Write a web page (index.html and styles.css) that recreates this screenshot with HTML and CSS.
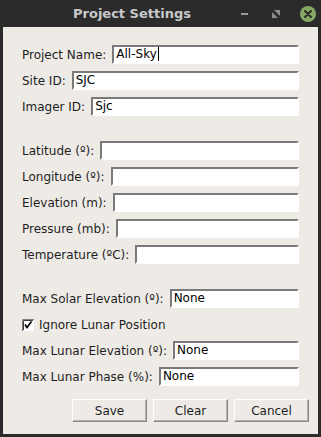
FILE: index.html
```html
<!DOCTYPE html>
<html lang="en">
<head>
    <meta charset="UTF-8" />
    <meta name="viewport" content="width=device-width, initial-scale=1.0"/>
    <title>Project Settings</title>
    <link rel="stylesheet" href="styles.css">
</head>
<body>

<div class="window">
    <div class="titlebar">
        <div class="title">Project Settings</div>
        <div class="controls">
            <span class="ctl-min"></span>
            <svg class="ctl-max" width="8" height="8" viewBox="0 0 8 8">
                <polygon points="2,0 8,0 8,6" fill="#8c8c8c"/>
                <polygon points="0,2 0,8 6,8" fill="#8c8c8c"/>
            </svg>
            <svg class="ctl-close" width="16" height="16" viewBox="0 0 16 16">
                <circle cx="8" cy="8" r="8" fill="#86a862"/>
                <path d="M5 5 L11 11 M11 5 L5 11" stroke="#2b2b2b" stroke-width="2" stroke-linecap="round"/>
            </svg>
        </div>
    </div>

    <div class="content">
        <!-- Project -->
        <div class="row">
            <label>Project Name:</label>
            <div class="entry">All-Sky<span class="cursor"></span></div>
        </div>
        <div class="row">
            <label>Site ID:</label>
            <div class="entry">SJC</div>
        </div>
        <div class="row">
            <label>Imager ID:</label>
            <div class="entry">Sjc</div>
        </div>

        <div class="spacer"></div>

        <!-- Location -->
        <div class="row">
            <label>Latitude (º):</label>
            <div class="entry"></div>
        </div>
        <div class="row">
            <label>Longitude (º):</label>
            <div class="entry"></div>
        </div>
        <div class="row">
            <label>Elevation (m):</label>
            <div class="entry"></div>
        </div>
        <div class="row">
            <label>Pressure (mb):</label>
            <div class="entry"></div>
        </div>
        <div class="row">
            <label>Temperature (ºC):</label>
            <div class="entry"></div>
        </div>

        <div class="spacer"></div>

        <!-- Limits -->
        <div class="row">
            <label>Max Solar Elevation (º):</label>
            <div class="entry">None</div>
        </div>
        <div class="row">
            <svg class="checkbox" width="12" height="12" viewBox="0 0 12 12">
                <rect x="0" y="0" width="12" height="12" fill="#fff"/>
                <path d="M0.5 12 V0.5 H12" stroke="#7f7f7f" fill="none"/>
                <path d="M1.5 11 V1.5 H11" stroke="#3c3c3c" fill="none"/>
                <path d="M3 5.5 L5 8.5 L9.5 2.5" stroke="#000" stroke-width="1.6" fill="none"/>
            </svg>
            <label>Ignore Lunar Position</label>
        </div>
        <div class="row">
            <label>Max Lunar Elevation (º):</label>
            <div class="entry">None</div>
        </div>
        <div class="row">
            <label>Max Lunar Phase (%):</label>
            <div class="entry">None</div>
        </div>

        <div class="buttons">
            <button class="btn">Save</button>
            <button class="btn">Clear</button>
            <button class="btn">Cancel</button>
        </div>
    </div>
</div>

</body>
</html>
```

FILE: styles.css
```css
body {
    margin: 0;
    padding: 0;
    background: #2b2b2b;
    font-family: 'DejaVu Sans', sans-serif;
    font-size: 12px;
    color: #1e1e1e;
}

.window {
    width: 321px;
    height: 437px;
    background: #2b2b2b;
    display: flex;
    flex-direction: column;
}

.titlebar {
    height: 27px;
    flex-shrink: 0;
    display: flex;
    align-items: center;
}

.title {
    width: 264px;
    text-align: center;
    font-weight: bold;
    font-size: 13px;
    color: #c9c9c9;
}

.controls {
    display: flex;
    align-items: center;
}

.ctl-min {
    display: block;
    width: 7px;
    height: 2px;
    background: #9a9a9a;
    margin-left: -23px;
}

.ctl-max {
    margin-left: 24px;
}

.ctl-close {
    margin-left: 20px;
}

.content {
    flex: 1;
    background: #eeebe7;
    margin: 0 3px 3px 3px;
    padding: 18px 19px 0 19px;
}

.row {
    display: flex;
    align-items: center;
    height: 19px;
    margin-bottom: 7px;
}

.row label {
    white-space: nowrap;
    margin-right: 6px;
}

.entry {
    flex: 1;
    height: 15px;
    line-height: 15px;
    background: #fff;
    border: 2px solid;
    border-color: #7a7a7a #fff #fff #7a7a7a;
    padding-left: 2px;
    color: #000;
}

.cursor {
    display: inline-block;
    width: 1px;
    height: 14px;
    background: #000;
    vertical-align: -3px;
    margin-left: 1px;
}

.spacer {
    height: 18px;
}

.checkbox {
    flex-shrink: 0;
    margin-right: 5px;
}

.buttons {
    display: flex;
    justify-content: flex-end;
    gap: 6px;
    margin-top: 13px;
    margin-right: -10px;
}

.btn {
    width: 75px;
    height: 23px;
    background: #eeebe7;
    border: 1px solid;
    border-color: #fff #888 #888 #fff;
    box-shadow: inset -1px -1px 0 #b5b2ae;
    font-family: 'DejaVu Sans', sans-serif;
    font-size: 12px;
    color: #1e1e1e;
    padding: 0;
}
```
